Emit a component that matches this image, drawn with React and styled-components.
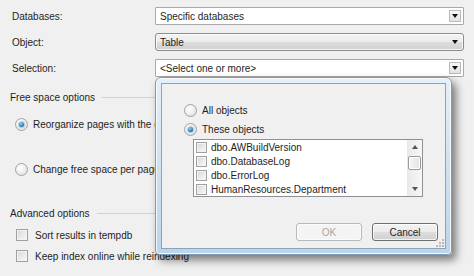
import React from 'react';
import styled, { createGlobalStyle } from 'styled-components';

const GlobalStyle = createGlobalStyle`
  html, body { margin: 0; padding: 0; }
  body {
    width: 474px;
    height: 276px;
    overflow: hidden;
    background: #f0f0f0;
    font-family: "Liberation Sans", Arial, sans-serif;
    font-size: 10px;
    color: #1e1e1e;
  }
`;

const Page = styled.div`
  position: relative;
  width: 474px;
  height: 276px;
  box-sizing: border-box;
  padding: 7px 10px 0 10px;
  background: #f0f0f0;
  overflow: hidden;
`;

const Form = styled.div`
  display: grid;
  grid-template-columns: 145px 1fr;
  grid-auto-rows: 18px;
  row-gap: 8px;
  align-items: center;
`;

const Label = styled.div`
  padding-left: 2px;
  white-space: nowrap;
`;

const Combo = styled.div`
  height: 18px;
  box-sizing: border-box;
  display: flex;
  align-items: center;
  padding-left: 4px;
  border: 1px solid ${(p) => (p.$button ? '#8c8c8c' : '#a9a9a9')};
  border-radius: ${(p) => (p.$button ? '3px' : '1px')};
  background: ${(p) =>
    p.$button
      ? 'linear-gradient(180deg, #f3f3f3 0%, #ececec 48%, #dddddd 52%, #d0d0d0 100%)'
      : '#ffffff'};
  box-shadow: ${(p) => (p.$button ? 'inset 0 0 0 1px rgba(255,255,255,0.75)' : 'none')};
`;

const ComboText = styled.span`
  flex: 1;
  white-space: nowrap;
  overflow: hidden;
`;

const DropButton = styled.div`
  width: 12px;
  height: 12px;
  margin-right: 2px;
  box-sizing: border-box;
  border: 1px solid ${(p) => (p.$plain ? 'transparent' : '#b9b9b9')};
  background: ${(p) => (p.$plain ? 'transparent' : 'linear-gradient(180deg, #f7f7f7, #e2e2e2)')};
  display: flex;
  align-items: center;
  justify-content: center;
`;

const Arrow = styled.span`
  width: 0;
  height: 0;
  border-left: 3px solid transparent;
  border-right: 3px solid transparent;
  border-${(p) => (p.$up ? 'bottom' : 'top')}: 4px solid ${(p) => p.$color || '#111'};
`;

const GroupHeader = styled.div`
  display: flex;
  align-items: center;
  gap: 7px;
  width: 145px;
  height: 12px;
  margin-top: ${(p) => p.$mt}px;
  white-space: nowrap;
  &::after {
    content: '';
    flex: 1;
    height: 1px;
    background: #d2d2d2;
  }
`;

const OptionRow = styled.div`
  display: flex;
  align-items: center;
  height: 14px;
  gap: ${(p) => p.$gap ?? 5}px;
  margin-top: ${(p) => p.$mt || 0}px;
  margin-left: ${(p) => p.$ml || 0}px;
  white-space: nowrap;
`;

const Radio = styled.span`
  width: 13px;
  height: 13px;
  flex: none;
  box-sizing: border-box;
  border-radius: 50%;
  border: 1px solid #a2a2a2;
  background: radial-gradient(circle at 40% 35%, #ffffff 0%, #f2f2f2 40%, #d8d8d8 100%);
  display: flex;
  align-items: center;
  justify-content: center;
  &::after {
    content: '';
    display: ${(p) => (p.$checked ? 'block' : 'none')};
    width: 5px;
    height: 5px;
    border-radius: 50%;
    background: radial-gradient(circle at 40% 35%, #9ad2f2 0%, #2b83c2 55%, #10507e 100%);
    box-shadow: 0 0 1px 1px rgba(60, 120, 170, 0.35);
  }
`;

const Check = styled.span`
  width: ${(p) => p.$size || 12}px;
  height: ${(p) => p.$size || 12}px;
  flex: none;
  box-sizing: border-box;
  border: 1px solid #a0a0a0;
  background: linear-gradient(135deg, #d6d6d6 0%, #ececec 60%, #fafafa 100%);
  box-shadow: inset 0 0 0 1px #f4f4f4;
`;

const Dialog = styled.div`
  position: absolute;
  left: 155px;
  top: 77px;
  width: 297px;
  height: 178px;
  box-sizing: border-box;
  border: 1px solid #7d9ab2;
  border-radius: 6px 6px 4px 4px;
  background: linear-gradient(180deg, #e4f0fa 0%, #cfe2f2 50%, #bcd5ea 100%);
  padding: 5px;
  display: flex;
  box-shadow: 4px 5px 9px rgba(0, 0, 0, 0.5), inset 0 0 0 1px rgba(255, 255, 255, 0.8);
`;

const DialogBody = styled.div`
  position: relative;
  flex: 1;
  box-sizing: border-box;
  border: 1px solid #8ea3b6;
  background: #f0f0f0;
  padding: 19px 7px 0 22px;
  display: flex;
  flex-direction: column;
`;

const ListBox = styled.div`
  margin-top: 3px;
  margin-left: 9px;
  width: 230px;
  height: 58px;
  box-sizing: border-box;
  border: 1px solid #8e9196;
  background: #ffffff;
  display: flex;
`;

const ListItems = styled.div`
  flex: 1;
  display: flex;
  flex-direction: column;
`;

const ListItem = styled.div`
  height: 14px;
  display: flex;
  align-items: center;
  gap: 4px;
  padding-left: 2px;
  white-space: nowrap;
`;

const ScrollBar = styled.div`
  width: 15px;
  display: flex;
  flex-direction: column;
  align-items: center;
  background: linear-gradient(90deg, #e9e9e9, #f7f7f7);
`;

const ScrollArrow = styled.div`
  height: 14px;
  width: 100%;
  display: flex;
  align-items: center;
  justify-content: center;
`;

const Thumb = styled.div`
  width: 13px;
  height: 14px;
  margin-top: 2px;
  box-sizing: border-box;
  border: 1px solid #9a9a9a;
  border-radius: 2px;
  background: linear-gradient(90deg, #f6f6f6, #e3e3e3);
  box-shadow: inset 0 0 0 1px #ffffff;
`;

const Spacer = styled.div`
  flex: 1;
`;

const ButtonRow = styled.div`
  display: flex;
  justify-content: flex-end;
  gap: 10px;
  margin-top: 26px;
`;

const Button = styled.button`
  width: 66px;
  height: 18px;
  padding: 0;
  font: inherit;
  border-radius: 3px;
  border: 1px solid ${(p) => (p.disabled ? '#b5b9bc' : '#707070')};
  background: ${(p) =>
    p.disabled
      ? '#f4f4f4'
      : 'linear-gradient(180deg, #f3f3f3 0%, #ebebeb 48%, #dddddd 52%, #cfcfcf 100%)'};
  color: ${(p) => (p.disabled ? '#a6a6a6' : '#1e1e1e')};
  box-shadow: inset 0 0 0 1px rgba(255, 255, 255, 0.75);
`;

const Grip = styled.svg`
  position: absolute;
  right: 1px;
  bottom: 1px;
`;

function DropCombo({ text, button }) {
  return (
    <Combo $button={button}>
      <ComboText>{text}</ComboText>
      <DropButton $plain={button}>
        <Arrow />
      </DropButton>
    </Combo>
  );
}

const items = [
  'dbo.AWBuildVersion',
  'dbo.DatabaseLog',
  'dbo.ErrorLog',
  'HumanResources.Department',
];

export default function App() {
  return (
    <>
      <GlobalStyle />
      <Page>
        <Form>
          <Label>Databases:</Label>
          <DropCombo text="Specific databases" />
          <Label>Object:</Label>
          <DropCombo text="Table" button />
          <Label>Selection:</Label>
          <DropCombo text="<Select one or more>" />
        </Form>

        <GroupHeader $mt={14}>Free space options</GroupHeader>
        <OptionRow $mt={14} $ml={5}>
          <Radio $checked />
          Reorganize pages with the default amount of free space
        </OptionRow>
        <OptionRow $mt={31} $ml={5}>
          <Radio />
          Change free space per page percentage to:
        </OptionRow>

        <GroupHeader $mt={31}>Advanced options</GroupHeader>
        <OptionRow $mt={9} $ml={6} $gap={7}>
          <Check />
          Sort results in tempdb
        </OptionRow>
        <OptionRow $mt={7} $ml={6} $gap={7}>
          <Check />
          Keep index online while reindexing
        </OptionRow>

        <Dialog>
          <DialogBody>
            <OptionRow>
              <Radio />
              All objects
            </OptionRow>
            <OptionRow $mt={5}>
              <Radio $checked />
              These objects
            </OptionRow>
            <ListBox>
              <ListItems>
                {items.map((it) => (
                  <ListItem key={it}>
                    <Check $size={11} />
                    {it}
                  </ListItem>
                ))}
              </ListItems>
              <ScrollBar>
                <ScrollArrow>
                  <Arrow $up $color="#555" />
                </ScrollArrow>
                <Thumb />
                <Spacer />
                <ScrollArrow>
                  <Arrow $color="#555" />
                </ScrollArrow>
              </ScrollBar>
            </ListBox>
            <ButtonRow>
              <Button disabled>OK</Button>
              <Button>Cancel</Button>
            </ButtonRow>
            <Grip width="8" height="8" viewBox="0 0 8 8">
              {[[6, 0], [6, 3], [3, 3], [6, 6], [3, 6], [0, 6]].map(([x, y]) => (
                <rect key={`${x}-${y}`} x={x} y={y} width="2" height="2" fill="#b9b9b9" />
              ))}
            </Grip>
          </DialogBody>
        </Dialog>
      </Page>
    </>
  );
}
